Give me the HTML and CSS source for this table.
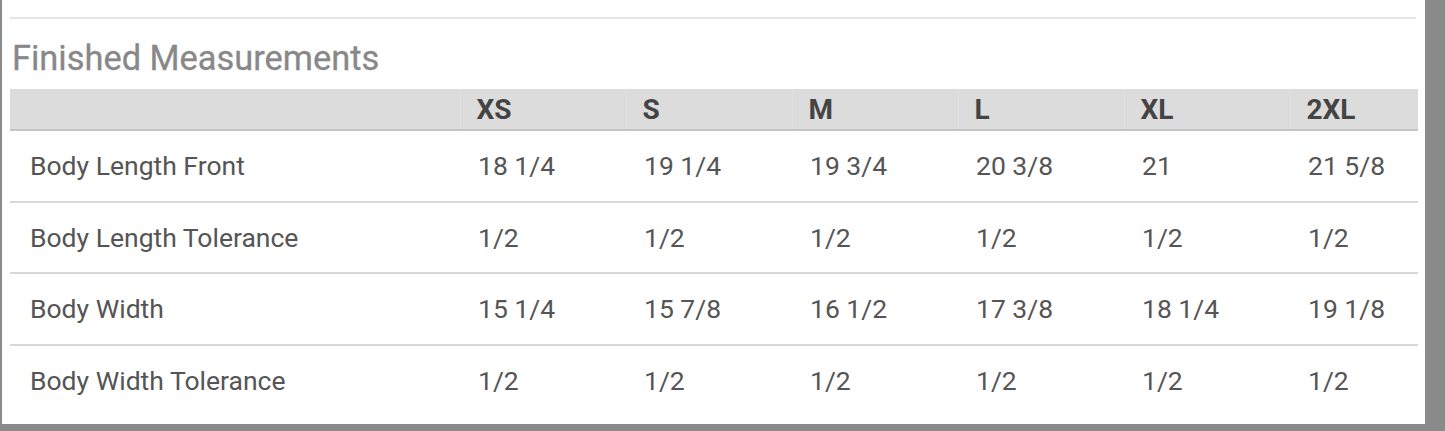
FILE: index.html
```html
<!DOCTYPE html>
<html>
<head>
<meta charset="utf-8">
<link rel="stylesheet" href="styles.css">
</head>
<body>
<div class="panel">
  <div class="rule"></div>
  <h2 class="title">Finished Measurements</h2>
  <table class="sizes">
    <colgroup>
      <col class="c-label"><col class="c-size"><col class="c-size"><col class="c-size"><col class="c-size"><col class="c-size"><col class="c-last">
    </colgroup>
    <thead>
      <tr><th></th><th>XS</th><th>S</th><th>M</th><th>L</th><th>XL</th><th>2XL</th></tr>
    </thead>
    <tbody>
      <tr><td class="label">Body Length Front</td><td>18 1/4</td><td>19 1/4</td><td>19 3/4</td><td>20 3/8</td><td>21</td><td>21 5/8</td></tr>
      <tr><td class="label">Body Length Tolerance</td><td>1/2</td><td>1/2</td><td>1/2</td><td>1/2</td><td>1/2</td><td>1/2</td></tr>
      <tr><td class="label">Body Width</td><td>15 1/4</td><td>15 7/8</td><td>16 1/2</td><td>17 3/8</td><td>18 1/4</td><td>19 1/8</td></tr>
      <tr><td class="label">Body Width Tolerance</td><td>1/2</td><td>1/2</td><td>1/2</td><td>1/2</td><td>1/2</td><td>1/2</td></tr>
    </tbody>
  </table>
</div>
</body>
</html>
```
FILE: styles.css
```css
html, body {
  margin: 0;
  padding: 0;
  background: #8a8a8a;
  font-family: Roboto, "Liberation Sans", sans-serif;
}
.panel {
  margin-left: 2px;
  width: 1423px;
  height: 424px;
  background: #fff;
  padding: 0 9px 0 8px;
  box-sizing: border-box;
  overflow: hidden;
}
.rule {
  margin-top: 17px;
  height: 2px;
  background: #e4e4e4;
}
.title {
  margin: 19px 0 0 2px;
  font-size: 34.4px;
  line-height: 40px;
  font-weight: 400;
  color: #888;
  height: 51px;
  -webkit-text-stroke: 0.3px #888;
}
.sizes {
  width: 1406px;
  border-collapse: collapse;
  table-layout: fixed;
  color: #555;
}
.c-label { width: 450px; }
.c-size { width: 166px; }
.c-last { width: 128px; }
.sizes thead tr {
  background: #dcdcdc;
  border-bottom: 2px solid #c4c4c4;
}
.sizes th {
  height: 40px;
  padding: 0 0 0 16px;
  text-align: left;
  font-size: 28px;
  font-weight: 700;
  color: #444;
  border-left: 1px solid #e2e2e2;
}
.sizes th:first-child { border-left: none; }
.sizes td {
  height: 69.5px;
  padding: 0 0 0 18px;
  font-size: 26.5px;
  border-bottom: 2px solid #d8d8d8;
}
.sizes tbody tr:last-child td { border-bottom: none; }
.sizes td.label { padding-left: 20px; }
```
